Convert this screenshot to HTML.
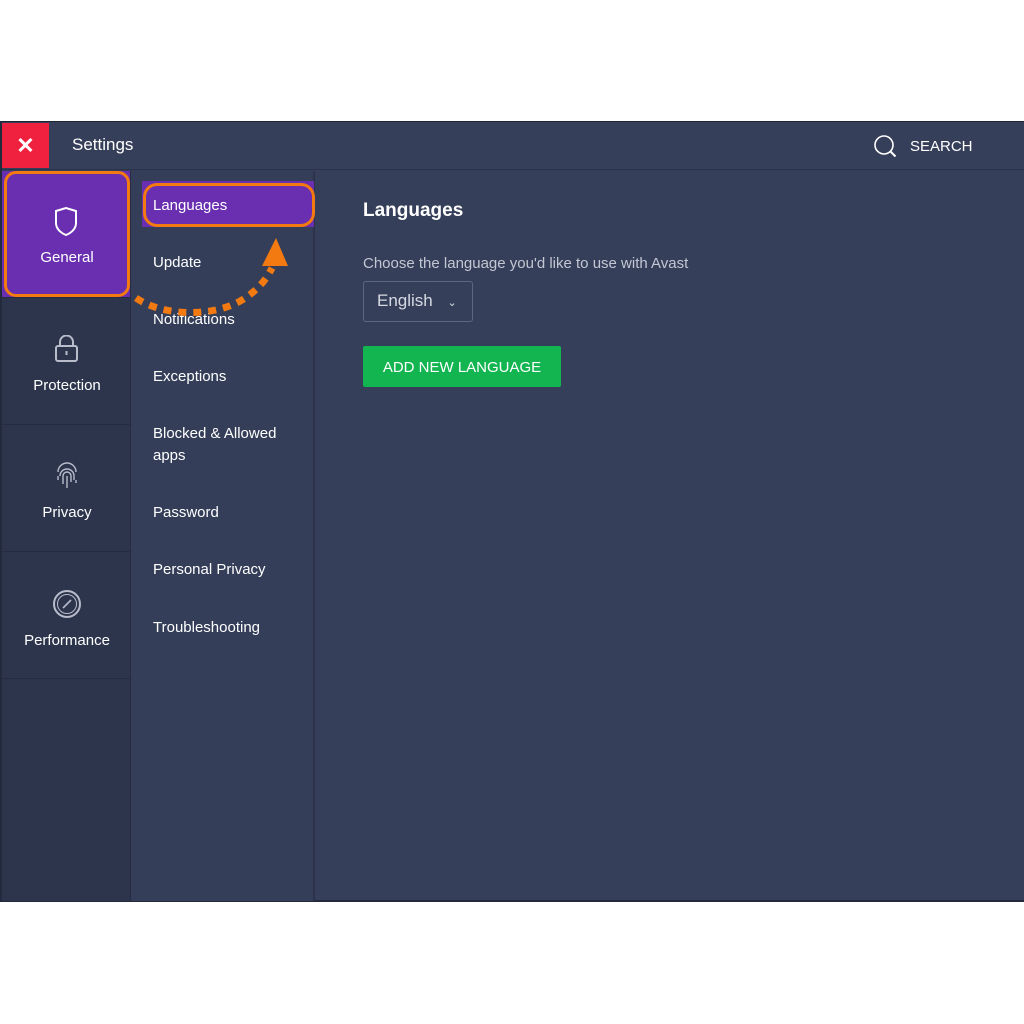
<!DOCTYPE html>
<html><head><meta charset="utf-8"><style>
*{margin:0;padding:0;box-sizing:border-box}
body{width:1024px;height:1024px;background:#fff;position:relative;overflow:hidden;font-family:"Liberation Sans",sans-serif;color:#fff}
.app{position:absolute;left:0;top:121px;width:1024px;height:781px;background:#363f5a;border-top:1px solid #1f2538;border-bottom:2px solid #232a3d;border-left:2px solid #232a3d}
.hdr{position:absolute;left:0;top:0;width:1022px;height:48px;background:#363f5a;border-bottom:1px solid #2a3148}
.close{position:absolute;left:0;top:1px;width:47px;height:45px;background:#f0203f;font-size:22px;font-weight:bold;text-align:center;line-height:45px}
.title{position:absolute;left:70px;top:13px;font-size:17px}
.search{position:absolute;left:908px;top:16px;font-size:15px}
.side{position:absolute;left:0;top:49px;width:129px;height:730px;background:#2d354d;border-right:1px solid #262d42}
.sitem{position:absolute;left:0;width:128px;height:127px;border-bottom:1px solid #252c40;text-align:center;font-size:15px}
.sub{position:absolute;left:129px;top:49px;width:184px;height:730px;background:#343e59;border-right:2px solid #2b3249}
.sub div{position:absolute;left:22px;font-size:15px}
.main{position:absolute;left:361px;top:49px}
</style></head><body>
<div class="app">
 <div class="hdr">
  <div class="close">✕</div>
  <div class="title">Settings</div>
  <svg style="position:absolute;left:871px;top:12px" width="26" height="26" viewBox="0 0 26 26"><circle cx="11" cy="11" r="9" fill="none" stroke="#fff" stroke-width="1.6"/><path d="M17.5 17.5l5 5" stroke="#fff" stroke-width="2"/></svg>
  <div class="search">SEARCH</div>
 </div>
 <div class="side">
  <div class="sitem" style="top:0;background:#6a2fb0;height:127px"></div>
  <div class="sitem" style="top:127px;"></div>
  <div class="sitem" style="top:254px;"></div>
  <div class="sitem" style="top:381px;"></div>
 </div>
 <div style="position:absolute;left:2px;top:49px;width:126px;height:126px;border:3px solid #f27a10;border-radius:12px;background:#6a2fb0"></div>
 <svg style="position:absolute;left:52px;top:85px" width="24" height="30" viewBox="0 0 24 30"><path d="M2 4 L12 1 L22 4 V16 C22 22 17 26 12 28 C7 26 2 22 2 16Z" fill="none" stroke="#fff" stroke-width="2"/></svg>
 <div style="position:absolute;left:0;width:130px;top:127px;text-align:center;font-size:15px">General</div>
 <svg style="position:absolute;left:53px;top:213px" width="24" height="28" viewBox="0 0 24 28"><rect x="1" y="11" width="21" height="15" rx="2" fill="none" stroke="#b8bccb" stroke-width="2"/><path d="M5 11V7a6.5 6.5 0 0 1 13 0v4" fill="none" stroke="#b8bccb" stroke-width="2"/><path d="M11.5 16v4" stroke="#b8bccb" stroke-width="2"/></svg>
 <div style="position:absolute;left:0;width:130px;top:255px;text-align:center;font-size:15px">Protection</div>
 <svg style="position:absolute;left:53px;top:340px" width="24" height="28" viewBox="0 0 24 28" fill="none" stroke="#b8bccb" stroke-width="1.4"><path d="M3 10a9 9 0 0 1 18 0"/><path d="M5 14a7 7 0 0 1 14 0v4"/><path d="M8 22v-8a4 4 0 0 1 8 0v6"/><path d="M12 14v12"/><path d="M3 14v4M21 18v3"/></svg>
 <div style="position:absolute;left:0;width:130px;top:382px;text-align:center;font-size:15px">Privacy</div>
 <svg style="position:absolute;left:50px;top:467px" width="30" height="30" viewBox="0 0 30 30"><circle cx="15" cy="15" r="13" fill="none" stroke="#b8bccb" stroke-width="2"/><circle cx="15" cy="15" r="9.5" fill="none" stroke="#b8bccb" stroke-width="1"/><path d="M11 19l8-8" stroke="#b8bccb" stroke-width="1.6"/></svg>
 <div style="position:absolute;left:0;width:130px;top:510px;text-align:center;font-size:15px">Performance</div>
 <div class="sub">
  <div style="left:11px;top:10px;width:172px;height:46px;background:#6a2fb0"></div>
  <div style="left:12px;top:12px;width:172px;height:44px;border:3px solid #f27a10;border-radius:14px;background:#6a2fb0"></div>
  <div style="top:26px">Languages</div>
  <div style="top:83px">Update</div>
  <div style="top:140px">Notifications</div>
  <div style="top:197px">Exceptions</div>
  <div style="top:252px;line-height:22px">Blocked &amp; Allowed<br>apps</div>
  <div style="top:333px">Password</div>
  <div style="top:390px">Personal Privacy</div>
  <div style="top:448px">Troubleshooting</div>
 </div>
 <svg style="position:absolute;left:120px;top:110px" width="180" height="100" viewBox="0 0 180 100"><path d="M14 66 C40 84 90 86 120 68 C136 58 144 48 150 36" fill="none" stroke="#f27a10" stroke-width="7" stroke-dasharray="8 7"/><path d="M140 34 L154 6 L166 34Z" fill="#f27a10"/></svg>
 <div class="main">
  <div style="font-size:19px;font-weight:bold;position:absolute;top:29px;white-space:nowrap">Languages</div>
  <div style="font-size:15px;color:#c3c7d3;position:absolute;top:84px;white-space:nowrap">Choose the language you'd like to use with Avast</div>
  <div style="position:absolute;top:110px;width:110px;height:41px;border:1px solid #5d6680;border-radius:3px;font-size:17px;color:#d6d9e2;padding:9px 13px;white-space:nowrap">English <span style="font-size:11px;margin-left:10px">&#8964;</span></div>
  <div style="position:absolute;top:175px;width:198px;height:41px;background:#12b550;border-radius:2px;font-size:15px;text-align:center;line-height:43px;white-space:nowrap">ADD NEW LANGUAGE</div>
 </div>
</div>
</body></html>
